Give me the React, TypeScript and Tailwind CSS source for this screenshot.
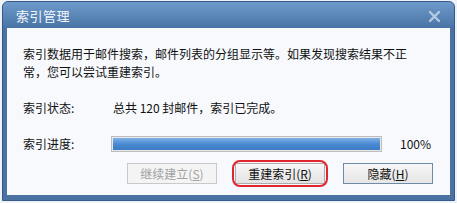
export default function App() {
  const font = "font-['Microsoft_YaHei','Noto_Sans_CJK_SC',sans-serif]";

  return (
    <div className={`w-[457px] h-[203px] bg-[#eef1f5] pl-[2px] pt-[1px] ${font}`}>
      <div className="w-[453px] h-[200px] flex flex-col rounded-t-[6px] border border-[#34598a] bg-[#4a72a3]">
        {/* title bar */}
        <div className="h-[26px] flex items-center justify-between pl-[13px] pr-[14px] rounded-t-[5px] bg-gradient-to-b from-[#6f9bcb] to-[#4873a6]">
          <span className="text-[13px] leading-none text-[#f2f6fb] tracking-[0.5px]">索引管理</span>
          <svg width="11" height="11" viewBox="0 0 11 11" className="mt-[2px]">
            <path d="M1 1 L10 10 M10 1 L1 10" stroke="#b4c9e0" strokeWidth="2.4" strokeLinecap="square" />
          </svg>
        </div>

        {/* body */}
        <div className="mx-[4px] mb-[5px] flex-1 bg-[#f7f9fd] flex flex-col pl-[16px] pt-[17px] text-[12px] text-[#111]">
          <p className="w-[390px] leading-[18px]">
            索引数据用于邮件搜索，邮件列表的分组显示等。如果发现搜索结果不正常，您可以尝试重建索引。
          </p>

          <div className="mt-[18px] h-[18px] flex items-center">
            <span className="w-[90px]">索引状态:</span>
            <span>总共 120 封邮件，索引已完成。</span>
          </div>

          <div className="mt-[19px] h-[16px] flex items-center">
            <span className="w-[88px]">索引进度:</span>
            <div className="w-[271px] h-[16px] border border-[#bdbdbd] bg-[#e8e8e8] p-[1px]">
              <div className="h-full w-full bg-gradient-to-b from-[#7fb1e6] via-[#4a8bd3] to-[#3d7bc4]" />
            </div>
            <span className="ml-[18px]">100%</span>
          </div>

          <div className="mt-[11px] flex justify-end pr-[17px] gap-[18px]">
            <button
              disabled
              className="w-[90px] h-[21px] border border-[#c9c9c9] bg-[#f4f4f4] text-[#a2a2a2] text-[12px] leading-none"
            >
              继续建立(<span className="underline">S</span>)
            </button>
            <div className="relative">
              <div className="absolute -inset-[3px] rounded-[8px] border-2 border-[#e2262f]" />
              <button className="w-[90px] h-[21px] border border-[#adadad] bg-gradient-to-b from-[#f7f7f7] to-[#e3e3e3] text-[12px] leading-none text-[#111]">
                重建索引(<span className="underline">R</span>)
              </button>
            </div>
            <button className="w-[90px] h-[21px] border border-[#6f89a8] bg-gradient-to-b from-[#f7f7f7] to-[#e6e6e6] text-[12px] leading-none text-[#111]">
              隐藏(<span className="underline">H</span>)
            </button>
          </div>
        </div>
      </div>
    </div>
  );
}
